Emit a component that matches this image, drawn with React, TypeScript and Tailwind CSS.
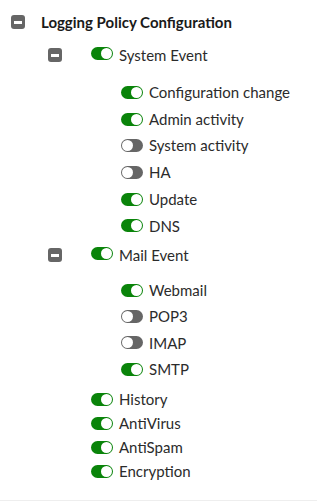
import React from 'react';

type Item = { label: string; on: boolean };

const systemEvents: Item[] = [
  { label: 'Configuration change', on: true },
  { label: 'Admin activity', on: true },
  { label: 'System activity', on: false },
  { label: 'HA', on: false },
  { label: 'Update', on: true },
  { label: 'DNS', on: true },
];

const mailEvents: Item[] = [
  { label: 'Webmail', on: true },
  { label: 'POP3', on: false },
  { label: 'IMAP', on: false },
  { label: 'SMTP', on: true },
];

const others: Item[] = [
  { label: 'History', on: true },
  { label: 'AntiVirus', on: true },
  { label: 'AntiSpam', on: true },
  { label: 'Encryption', on: true },
];

const Collapse: React.FC = () => (
  <span className="flex h-[14px] w-[14px] items-center justify-center rounded-[3px] bg-[#666]">
    <span className="h-[3px] w-[8px] bg-white" />
  </span>
);

const Toggle: React.FC<{ on: boolean }> = ({ on }) => (
  <span
    className={`flex h-[13px] w-[22px] shrink-0 items-center rounded-full p-[1px] ${
      on ? 'justify-end bg-[#0a840a]' : 'justify-start bg-[#666]'
    }`}
  >
    <span className="h-[11px] w-[11px] rounded-full bg-white" />
  </span>
);

const Row: React.FC<{ item: Item; indent: string; height: string }> = ({ item, indent, height }) => (
  <div className={`flex items-center gap-[6px] ${indent} ${height}`}>
    <Toggle on={item.on} />
    <span className="text-[15px] text-[#2b2b2b]">{item.label}</span>
  </div>
);

export default function App() {
  return (
    <div
      className="h-[501px] w-full border-b border-[#eee] bg-white pt-[7px]"
      style={{ fontFamily: 'Lato, "Open Sans", sans-serif' }}
    >
      {/* Root */}
      <div className="flex h-[30px] items-center pl-[11px]">
        <Collapse />
        <span className="ml-[16px] text-[15px] font-bold text-[#1a1a1a]">Logging Policy Configuration</span>
      </div>

      {/* System Event group */}
      <div className="mt-[5px] flex h-[26px] items-center pl-[48px]">
        <Collapse />
        <span className="ml-[29px] mb-[3px]">
          <Toggle on />
        </span>
        <span className="ml-[6px] text-[15px] text-[#2b2b2b]">System Event</span>
      </div>
      <div className="mt-[11px]">
        {systemEvents.map((it) => (
          <Row key={it.label} item={it} indent="pl-[121px]" height="h-[26.7px]" />
        ))}
      </div>

      {/* Mail Event group */}
      <div className="mt-[3px] flex h-[26px] items-center pl-[48px]">
        <Collapse />
        <span className="ml-[29px] mb-[3px]">
          <Toggle on />
        </span>
        <span className="ml-[6px] text-[15px] text-[#2b2b2b]">Mail Event</span>
      </div>
      <div className="mt-[9px]">
        {mailEvents.map((it) => (
          <Row key={it.label} item={it} indent="pl-[121px]" height="h-[26.3px]" />
        ))}
      </div>

      {/* Top-level toggles */}
      <div className="mt-[5px]">
        {others.map((it) => (
          <Row key={it.label} item={it} indent="pl-[91px]" height="h-[24px]" />
        ))}
      </div>
    </div>
  );
}
